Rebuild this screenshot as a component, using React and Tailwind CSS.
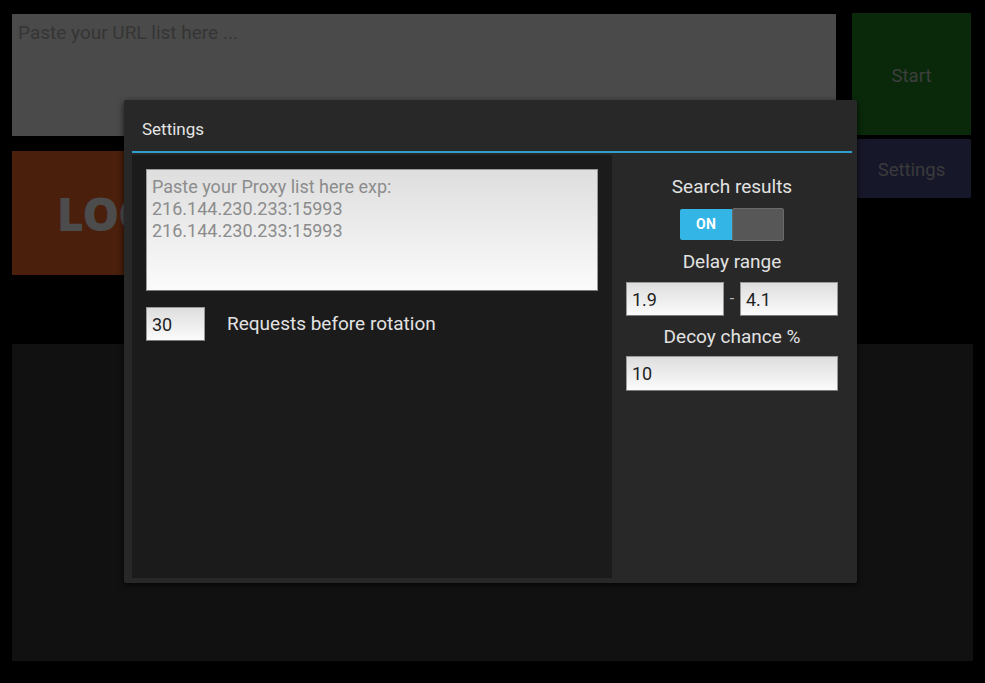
import { useState } from 'react'

// Proxy tool main screen with the Settings popup open over it.
// Background widgets are drawn in their dimmed (behind-modal) colours.

const field =
  'border border-[#9a9a9a] border-b-[#7a7a7a] bg-gradient-to-b from-[#dedede] to-[#fbfbfb] text-[18px] text-[#1e1e1e] outline-none'

function Field({ value, className = '' }) {
  return <input readOnly value={value} className={`${field} h-[34px] px-[5px] ${className}`} />
}

function Toggle({ on }) {
  return (
    <div className="flex h-[31px] w-[104px] items-stretch">
      <div className="flex w-[52px] items-center justify-center rounded-l-[2px] bg-[#33b5e5] text-[14px] font-bold tracking-wide text-white">
        {on ? 'ON' : ''}
      </div>
      <div className="-my-px flex-1 rounded-[2px] border border-[#6a6a6a] bg-[#575757]" />
    </div>
  )
}

function SettingsPopup() {
  const [delay] = useState({ min: '1.9', max: '4.1' })

  return (
    <div className="absolute left-[124px] top-[100px] flex h-[483px] w-[733px] flex-col rounded-[2px] bg-[#282828] pb-[5px] pl-2 pr-[5px] shadow-[0_2px_6px_rgba(0,0,0,0.7)]">
      <div className="flex h-[51px] items-center pl-[10px] pt-[8px] text-[17px] text-[#e4e4e4]">Settings</div>
      <div className="h-[2px] bg-[#2f9fd0]" />
      <div className="mt-[2px] flex flex-1">
        {/* proxy list */}
        <div className="flex w-[480px] flex-col bg-[#1b1b1b] p-[14px]">
          <textarea
            readOnly
            placeholder={'Paste your Proxy list here exp:\n216.144.230.233:15993\n216.144.230.233:15993'}
            className={`${field} h-[122px] resize-none px-[5px] pt-[6px] leading-[22px] placeholder:text-[#8c8c8c]`}
          />
          <div className="mt-4 flex items-center">
            <Field value="30" className="w-[59px]" />
            <span className="ml-[22px] text-[19px] text-[#e2e2e2]">Requests before rotation</span>
          </div>
        </div>

        {/* options */}
        <div className="flex flex-1 flex-col items-center px-[14px] pt-[21px] text-[19px] text-[#e2e2e2]">
          <div className="h-[22px] leading-[22px]">Search results</div>
          <div className="mt-[11px]">
            <Toggle on />
          </div>
          <div className="mt-[11px] h-[22px] leading-[22px]">Delay range</div>
          <div className="mt-[9px] flex w-full items-center">
            <Field value={delay.min} className="w-[98px]" />
            <span className="flex-1 text-center text-[16px] text-[#bbb]">-</span>
            <Field value={delay.max} className="w-[98px]" />
          </div>
          <div className="mt-[10px] h-[22px] leading-[22px]">Decoy chance %</div>
          <Field value="10" className="mt-2 h-[35px] w-full" />
        </div>
      </div>
    </div>
  )
}

export default function App() {
  return (
    <div className="relative h-[683px] w-[985px] overflow-hidden bg-black font-['Roboto',sans-serif]">
      <div className="flex flex-col px-3 pt-[13px]">
        <div className="flex gap-4">
          <div className="flex flex-1 flex-col">
            <div className="mt-px h-[122px] bg-[#4a4a4a] px-[6px] pt-[5px] text-[19px] text-[#353535]">
              Paste your URL list here ...
            </div>
            <div className="mt-[15px] flex h-[124px] w-[420px] items-center bg-[#4a1f0c] pl-[45px] font-['Open_Sans',sans-serif] text-[46px] font-extrabold tracking-tight text-[#4c4c4c]">
              LOGO
            </div>
          </div>
          <div className="flex w-[121px] flex-col gap-1 pr-[2px]">
            <div className="flex h-[122px] items-center justify-center rounded-[1px] bg-[#0a290a] pt-[5px] text-[18.5px] text-[#3e3e3e]">
              Start
            </div>
            <div className="flex h-[59px] items-center justify-center rounded-[1px] bg-[#17172a] pt-[4px] text-[18.5px] text-[#3a3a3a]">
              Settings
            </div>
          </div>
        </div>
        <div className="mt-[69px] h-[317px] w-[961px] bg-[#111]" />
      </div>

      <SettingsPopup />
    </div>
  )
}
